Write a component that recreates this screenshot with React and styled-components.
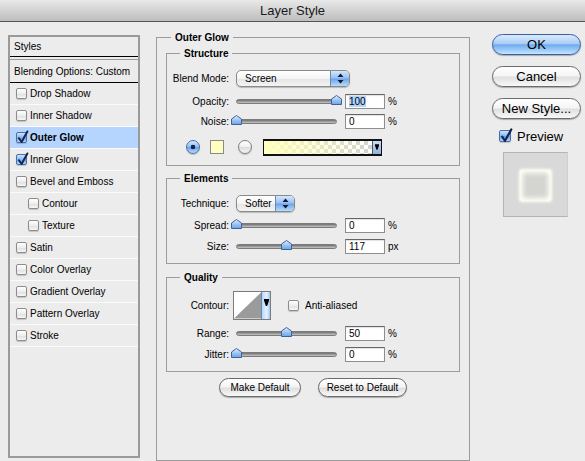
import React, { useId } from 'react';
import styled, { createGlobalStyle, css } from 'styled-components';

const FONT = '"Liberation Sans", Arial, sans-serif';

const GlobalStyle = createGlobalStyle`
  html, body {
    margin: 0;
    padding: 0;
    background: #ececec;
  }
  body {
    font-family: ${FONT};
    font-size: 10px;
    color: #000;
  }
`;

const Window = styled.div`
  width: 585px;
  height: 461px;
  overflow: hidden;
  background: #ececec;
  display: flex;
  flex-direction: column;
`;

const TitleBar = styled.div`
  height: 21px;
  flex: none;
  border-bottom: 1px solid #555;
  background: linear-gradient(#e9e9e9, #bdbdbd);
  display: flex;
  align-items: center;
  justify-content: center;
  font-size: 13px;
  color: #1a1a1a;
`;

const Body = styled.div`
  display: flex;
  align-items: flex-start;
  flex: 1;
`;

/* ---------- left styles list ---------- */

const StylesPanel = styled.div`
  width: 132px;
  height: 423px;
  margin: 13px 0 0 8px;
  border: 2px solid #9a9a9a;
  box-sizing: border-box;
  flex: none;
`;

const StylesHeader = styled.div`
  height: 19px;
  padding-left: 4px;
  display: flex;
  align-items: center;
  border-bottom: 1px solid #000;
`;

const BlendingRow = styled.div`
  height: 22px;
  margin-top: 2px;
  padding-left: 4px;
  display: flex;
  align-items: center;
  border-top: 1px solid #9a9a9a;
  border-bottom: 1px solid #000;
`;

const ItemRow = styled.div`
  height: 21px;
  display: flex;
  align-items: center;
  border-bottom: 1px solid #fbfbfb;
  background: ${p => (p.$active ? '#b5d5ff' : 'transparent')};
`;

const CheckBox = styled.span`
  width: ${p => p.$size || 11}px;
  height: ${p => p.$size || 11}px;
  margin-left: ${p => p.$left || 0}px;
  flex: none;
  box-sizing: border-box;
  border: 1px solid ${p => (p.$checked ? '#4a6ea8' : '#8c8c8c')};
  border-radius: 2px;
  display: inline-flex;
  background: ${p =>
    p.$checked
      ? 'linear-gradient(#cfe3fb, #8ab8f0 50%, #659fe8 52%, #b4d9fb)'
      : 'linear-gradient(#ffffff, #eeeeee 50%, #dedede 52%, #f7f7f7)'};
  box-shadow: 0 1px 1px rgba(0, 0, 0, 0.18);
`;

const ItemLabel = styled.span`
  margin-left: 3px;
  font-weight: ${p => (p.$bold ? 'bold' : 'normal')};
  white-space: nowrap;
`;

const CheckMark = ({ size = 11 }) => (
  <svg width={size} height={size} viewBox="0 0 11 11" style={{ overflow: 'visible' }}>
    <path d="M2 5.2 L4.6 9 L10.4 -1.5" fill="none" stroke="#172650" strokeWidth="2" strokeLinecap="round" strokeLinejoin="round" />
  </svg>
);

const styleItems = [
  { label: 'Drop Shadow' },
  { label: 'Inner Shadow' },
  { label: 'Outer Glow', checked: true, active: true },
  { label: 'Inner Glow', checked: true },
  { label: 'Bevel and Emboss' },
  { label: 'Contour', indent: true },
  { label: 'Texture', indent: true },
  { label: 'Satin' },
  { label: 'Color Overlay' },
  { label: 'Gradient Overlay' },
  { label: 'Pattern Overlay' },
  { label: 'Stroke' },
];

/* ---------- group boxes ---------- */

const OuterGroup = styled.fieldset`
  width: 314px;
  height: 430px;
  margin: 9px 0 0 16px;
  padding: 0 9px;
  border: 1px solid #9c9c9c;
  box-sizing: border-box;
  min-width: 0;
  flex: none;
`;

const SubGroup = styled.fieldset`
  margin: ${p => p.$mt}px 0 0 0;
  padding: 0 0 ${p => p.$pb}px 0;
  border: 1px solid #9c9c9c;
  min-width: 0;
`;

const Legend = styled.legend`
  font-weight: bold;
  font-size: 10px;
  line-height: 13px;
  padding: 0 4px;
  margin-left: ${p => p.$offset}px;
`;

const Row = styled.div`
  display: flex;
  align-items: center;
  height: ${p => p.$h || 18}px;
  margin-top: ${p => p.$mt || 0}px;
`;

const Label = styled.span`
  width: 62px;
  margin-right: 7px;
  text-align: right;
  flex: none;
  white-space: nowrap;
`;

/* pop-up menu */
const Popup = styled.div`
  width: ${p => p.$w}px;
  height: 17px;
  flex: none;
  display: flex;
  box-sizing: border-box;
  border: 1px solid #8a8a8a;
  border-radius: 5px;
  overflow: hidden;
  background: linear-gradient(#ffffff, #f4f4f4 50%, #e4e4e4 52%, #f4f4f4);
  box-shadow: 0 1px 1px rgba(0, 0, 0, 0.22);
`;

const PopupText = styled.span`
  flex: 1;
  padding-left: 8px;
  line-height: 15px;
`;

const PopupStepper = styled.span`
  width: 18px;
  flex: none;
  border-left: 1px solid #6d86b3;
  background: linear-gradient(#d5e7fc, #94c0f2 48%, #6aa3ea 52%, #b6dcfb);
  display: flex;
  align-items: center;
  justify-content: center;
`;

const Stepper = () => (
  <svg width="7" height="11" viewBox="0 0 7 11">
    <path d="M3.5 0.5 L6.5 4 H0.5 Z" fill="#101a33" />
    <path d="M3.5 10.5 L6.5 7 H0.5 Z" fill="#101a33" />
  </svg>
);

/* slider */
const Track = styled.div`
  position: relative;
  width: 101px;
  height: 5px;
  flex: none;
  box-sizing: border-box;
  border: 1px solid #7b7b7b;
  border-radius: 3px;
  background: linear-gradient(#6e6e6e, #a4a4a4 60%, #c6c6c6);
`;

const ThumbSvg = styled.svg`
  position: absolute;
  top: -5px;
  width: 11px;
  height: 10px;
`;

const Slider = ({ pos }) => {
  const id = useId();
  return (
    <Track>
      <ThumbSvg viewBox="0 0 11 10" style={{ left: `${pos - 6}px` }}>
        <defs>
          <linearGradient id={id} x1="0" y1="0" x2="0" y2="1">
            <stop offset="0" stopColor="#e2efff" />
            <stop offset="0.5" stopColor="#9ec6f4" />
            <stop offset="1" stopColor="#6aa2e8" />
          </linearGradient>
        </defs>
        <path d="M0.5 9.5 V4 L5.5 0.5 L10.5 4 V9.5 Z" fill={`url(#${id})`} stroke="#3f6299" strokeWidth="1" />
      </ThumbSvg>
    </Track>
  );
};

const NumField = styled.div`
  width: 40px;
  height: 15px;
  margin-left: 8px;
  flex: none;
  box-sizing: border-box;
  border: 1px solid #8e8e8e;
  border-top-color: #666;
  background: #fff;
  box-shadow: inset 0 1px 1px rgba(0, 0, 0, 0.12);
  padding-left: 3px;
  line-height: 13px;
`;

const Selected = styled.span`
  background: #b3d4fc;
`;

const Unit = styled.span`
  margin-left: 3px;
`;

/* colour row */
const Radio = styled.span`
  width: 14px;
  height: 14px;
  flex: none;
  margin-left: ${p => p.$left}px;
  box-sizing: border-box;
  border-radius: 50%;
  border: 1px solid ${p => (p.$on ? '#4b6ea6' : '#7d7d7d')};
  background: ${p =>
    p.$on
      ? 'radial-gradient(circle, #14224a 0 2px, transparent 2.6px), linear-gradient(#d4e7fc, #8fbcf1 50%, #67a0e8 52%, #b7dcfb)'
      : 'linear-gradient(#ffffff, #f0f0f0 50%, #dcdcdc 52%, #f5f5f5)'};
  box-shadow: 0 1px 1px rgba(0, 0, 0, 0.2);
`;

const Swatch = styled.span`
  width: 14px;
  height: 14px;
  flex: none;
  margin-left: 10px;
  box-sizing: border-box;
  border: 1px solid #8a8a8a;
  background: #ffffc2;
`;

const GradientBar = styled.div`
  width: 119px;
  height: 17px;
  flex: none;
  margin-left: 11px;
  display: flex;
  box-sizing: border-box;
  border: solid #111;
  border-width: 2px 1px;
  background: linear-gradient(to right, #ffffbe, rgba(255, 255, 200, 0) 92%),
    repeating-conic-gradient(#d2d2d2 0 25%, #ffffff 0 50%) 0 0 / 8px 8px;
`;

const GradientFill = styled.span`
  flex: 1;
`;

const GradientArrow = styled.span`
  width: 8px;
  flex: none;
  border-left: 1px solid #555;
  background: linear-gradient(#c9dcf5, #8fb2dc);
  display: flex;
  align-items: center;
  justify-content: center;
`;

const DownPointer = ({ w = 5, h = 7 }) => (
  <svg width={w} height={h} viewBox="0 0 5 7">
    <path d="M0 0 H5 V1.5 L3.2 7 H1.8 L0 1.5 Z" fill="#000" />
  </svg>
);

/* contour picker */
const ContourBox = styled.div`
  width: 38px;
  height: 29px;
  margin-left: -3px;
  flex: none;
  display: flex;
  box-sizing: border-box;
  border: 1px solid #7b7b7b;
  background: #fff;
`;

const ContourDrop = styled.span`
  width: 9px;
  flex: none;
  border-left: 1px solid #6d86b3;
  background: linear-gradient(to right, #b6d7fb, #e6f2ff 60%, #9cc6f4);
  display: flex;
  justify-content: center;
  padding-top: 7px;
  box-sizing: border-box;
`;

const AntiLabel = styled.span`
  margin-left: 6px;
`;

/* push buttons */
const PushButton = styled.button`
  width: ${p => p.$w}px;
  height: ${p => p.$h}px;
  margin: 0;
  margin-top: ${p => p.$mt || 0}px;
  padding: 0;
  flex: none;
  border-radius: 999px;
  border: 1px solid #6b6b6b;
  background: linear-gradient(#ffffff, #f4f4f4 48%, #dfdfdf 52%, #f8f8f8);
  box-shadow: 0 1px 1px rgba(0, 0, 0, 0.28);
  font-family: ${FONT};
  font-size: ${p => p.$fs || 13}px;
  color: #000;
  white-space: nowrap;
  ${p =>
    p.$primary &&
    css`
      border-color: #3a5e9e;
      background: linear-gradient(#dcebfd, #a9cdf5 45%, #72aaed 52%, #a4d3fb 85%, #c7e6ff);
    `}
`;

const ButtonRow = styled.div`
  display: flex;
  justify-content: center;
  gap: 17px;
  margin-top: 6px;
`;

/* right column */
const SideColumn = styled.div`
  width: 89px;
  margin: 12px 0 0 22px;
  display: flex;
  flex-direction: column;
  flex: none;
`;

const PreviewToggle = styled.div`
  display: flex;
  align-items: center;
  height: 12px;
  margin-top: 11px;
  font-size: 13px;
`;

const PreviewText = styled.span`
  margin-left: 6px;
`;

const PreviewBox = styled.div`
  width: 65px;
  height: 65px;
  margin: 10px 0 0 11px;
  box-sizing: border-box;
  border: 1px solid #b4b4b4;
  border-right-color: #cfcfcf;
  background: #d9d9d9;
  padding: 17px 0 0 16px;
`;

const GlowSquare = styled.div`
  width: 31px;
  height: 31px;
  border-radius: 2px;
  background: #d4d4d1;
  box-shadow: 0 0 3px 1px #fffff2, inset 0 0 5px 3px #fffff6;
`;

const App = () => (
  <>
    <GlobalStyle />
    <Window>
      <TitleBar>Layer Style</TitleBar>
      <Body>
        <StylesPanel>
          <StylesHeader>Styles</StylesHeader>
          <BlendingRow>Blending Options: Custom</BlendingRow>
          {styleItems.map(item => (
            <ItemRow key={item.label} $active={item.active}>
              <CheckBox $checked={item.checked} $left={item.indent ? 18 : 6}>
                {item.checked && <CheckMark />}
              </CheckBox>
              <ItemLabel $bold={item.active}>{item.label}</ItemLabel>
            </ItemRow>
          ))}
        </StylesPanel>

        <OuterGroup>
          <Legend $offset={5}>Outer Glow</Legend>

          <SubGroup $mt={3} $pb={9}>
            <Legend $offset={13}>Structure</Legend>
            <Row $mt={9}>
              <Label>Blend Mode:</Label>
              <Popup $w={114}>
                <PopupText>Screen</PopupText>
                <PopupStepper><Stepper /></PopupStepper>
              </Popup>
            </Row>
            <Row $mt={5}>
              <Label>Opacity:</Label>
              <Slider pos={100} />
              <NumField><Selected>100</Selected></NumField>
              <Unit>%</Unit>
            </Row>
            <Row $mt={2}>
              <Label>Noise:</Label>
              <Slider pos={0} />
              <NumField>0</NumField>
              <Unit>%</Unit>
            </Row>
            <Row $mt={8}>
              <Radio $on $left={19} />
              <Swatch />
              <Radio $left={14} />
              <GradientBar>
                <GradientFill />
                <GradientArrow><DownPointer w={4} h={6} /></GradientArrow>
              </GradientBar>
            </Row>
          </SubGroup>

          <SubGroup $mt={6} $pb={8}>
            <Legend $offset={13}>Elements</Legend>
            <Row $mt={9}>
              <Label>Technique:</Label>
              <Popup $w={59}>
                <PopupText>Softer</PopupText>
                <PopupStepper><Stepper /></PopupStepper>
              </Popup>
            </Row>
            <Row $mt={4}>
              <Label>Spread:</Label>
              <Slider pos={0} />
              <NumField>0</NumField>
              <Unit>%</Unit>
            </Row>
            <Row $mt={3}>
              <Label>Size:</Label>
              <Slider pos={50} />
              <NumField>117</NumField>
              <Unit>px</Unit>
            </Row>
          </SubGroup>

          <SubGroup $mt={7} $pb={8}>
            <Legend $offset={13}>Quality</Legend>
            <Row $mt={7} $h={29}>
              <Label>Contour:</Label>
              <ContourBox>
                <svg width="28" height="27" viewBox="0 0 28 27">
                  <path d="M0 27 L28 0 V27 Z" fill="#9b9b9b" />
                </svg>
                <ContourDrop><DownPointer /></ContourDrop>
              </ContourBox>
              <CheckBox $left={17} />
              <AntiLabel>Anti-aliased</AntiLabel>
            </Row>
            <Row $mt={4}>
              <Label>Range:</Label>
              <Slider pos={50} />
              <NumField>50</NumField>
              <Unit>%</Unit>
            </Row>
            <Row $mt={3}>
              <Label>Jitter:</Label>
              <Slider pos={0} />
              <NumField>0</NumField>
              <Unit>%</Unit>
            </Row>
          </SubGroup>

          <ButtonRow>
            <PushButton $w={82} $h={19} $fs={10}>Make Default</PushButton>
            <PushButton $w={89} $h={19} $fs={10}>Reset to Default</PushButton>
          </ButtonRow>
        </OuterGroup>

        <SideColumn>
          <PushButton $primary $w={89} $h={21}>OK</PushButton>
          <PushButton $w={89} $h={21} $mt={11}>Cancel</PushButton>
          <PushButton $w={89} $h={21} $mt={11}>New Style...</PushButton>
          <PreviewToggle>
            <CheckBox $checked $size={12} $left={7}>
              <CheckMark size={12} />
            </CheckBox>
            <PreviewText>Preview</PreviewText>
          </PreviewToggle>
          <PreviewBox>
            <GlowSquare />
          </PreviewBox>
        </SideColumn>
      </Body>
    </Window>
  </>
);

export default App;
